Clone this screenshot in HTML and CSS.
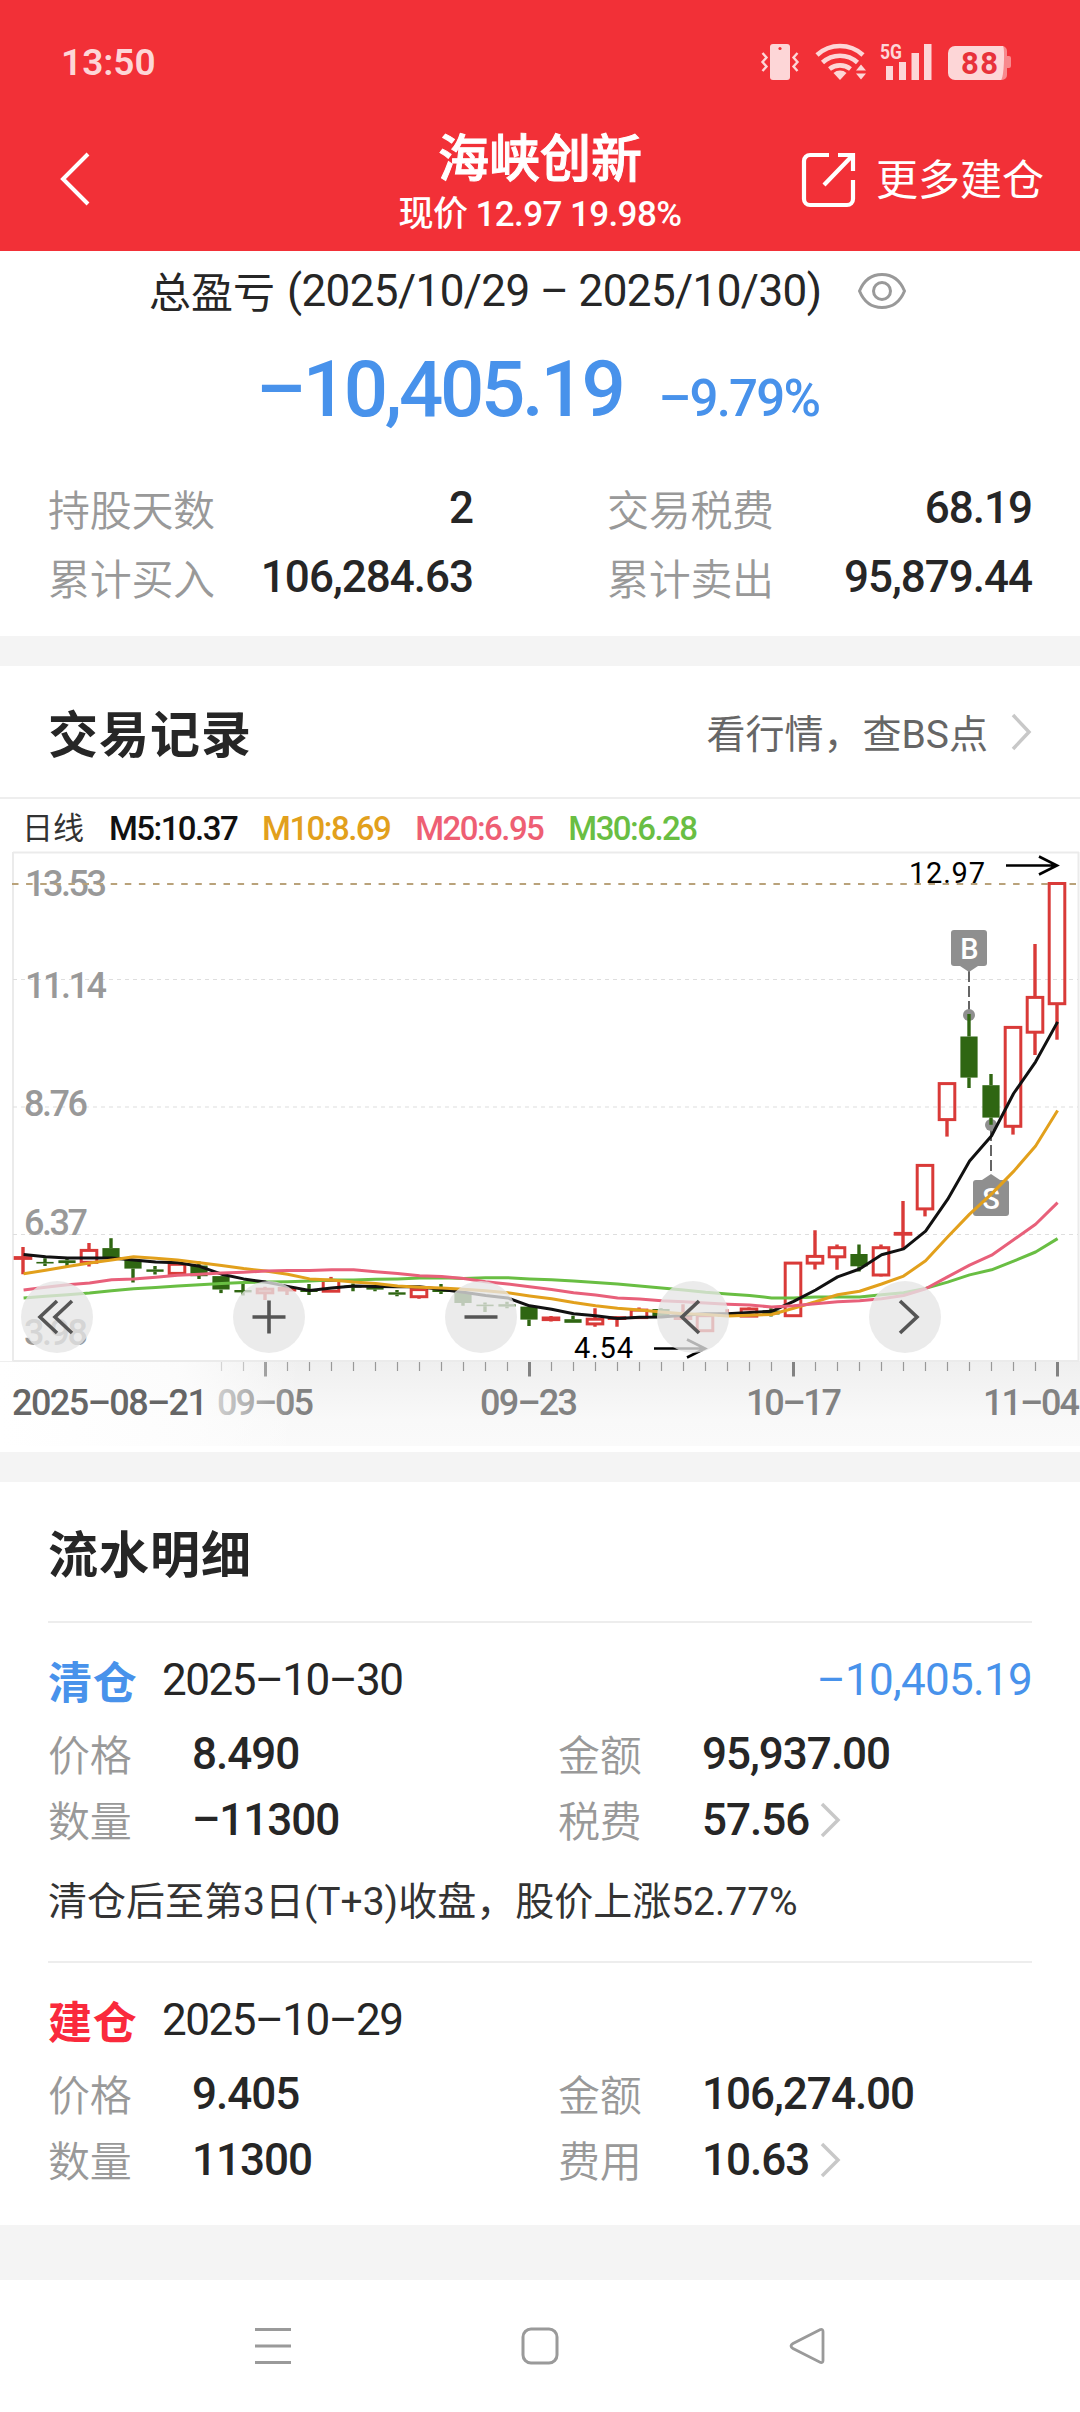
FILE: index.html
```html
<!DOCTYPE html>
<html lang="zh-CN">
<head>
<meta charset="utf-8">
<title>海峡创新</title>
<link rel="stylesheet" href="styles.css">
</head>
<body>
<div class="screen">
  <header class="top">
    <div class="status">
      <span class="clock">13:50</span>
      <svg class="status-icons" width="260" height="44" viewBox="0 0 260 44">
        <g fill="#fdd6d7">
          <path d="M13 4h14a3 3 0 0 1 3 3v30a3 3 0 0 1-3 3H13a3 3 0 0 1-3-3V7a3 3 0 0 1 3-3z"/>
          <circle cx="20" cy="8.500" r="1.600" fill="#f23037"/>
          <path d="M2.500 13l4 4.500-4 4.500 4 4.500-4 4.500M37.500 13l-4 4.500 4 4.500-4 4.500 4 4.500" fill="none" stroke="#fdd6d7" stroke-width="2.400"/>
          <g fill="none" stroke="#fdd6d7" stroke-width="4.600">
            <path d="M57 15a34 34 0 0 1 46 0"/>
            <path d="M62.500 22.500a26 26 0 0 1 35 0"/>
            <path d="M69.500 29a17 17 0 0 1 21 0"/>
          </g>
          <path d="M80 40l-6.500-7a10 10 0 0 1 13 0z"/>
          <path d="M101 24.500l5 6H96zM101 39.500l5-6H96z"/>
          <text class="net" x="120" y="18.500" textLength="22" lengthAdjust="spacingAndGlyphs">5G</text>
          <path d="M126 26h7v14h-7zM139 22h7v18h-7zM151.500 13h7.500v27h-7.500zM164 4h7.500v36H164z"/>
          <path d="M240 6h2a5 5 0 0 1 5 5v5h2a2 2 0 0 1 2 2v8a2 2 0 0 1-2 2h-2v7a5 5 0 0 1-5 5h-2z" fill="#f8898d"/>
          <path d="M195 6h48c2 2 1 32-2 34h-46a7 7 0 0 1-7-7V13a7 7 0 0 1 7-7z"/>
          <text class="battery" x="201" y="34" textLength="37">88</text>
        </g>
      </svg>
    </div>
    <div class="title-bar">
      <svg class="back" width="40" height="60" viewBox="0 0 40 60"><path d="M33 5L8 30l25 25" fill="none" stroke="#fff" stroke-width="4"/></svg>
      <div class="title">
        <h1>海峡创新</h1>
        <p>现价 12.97 19.98%</p>
      </div>
      <div class="more">
        <svg width="56" height="56" viewBox="0 0 56 56"><path d="M28 3H9a6 6 0 0 0-6 6v38a6 6 0 0 0 6 6h37a6 6 0 0 0 6-6V28M37 3h15v16M51 4L23 33" fill="none" stroke="#fff" stroke-width="4.200"/></svg>
        <span>更多建仓</span>
      </div>
    </div>
  </header>

  <section class="summary">
    <div class="period">
      <span class="period-name">总盈亏</span>
      <span class="period-range">(2025/10/29 – 2025/10/30)</span>
      <svg width="50" height="38" viewBox="0 0 50 38"><g fill="none" stroke="#999" stroke-width="3"><path d="M2.500 19C7 8 15 2.500 25 2.500S43 8 47.500 19C43 30 35 35.500 25 35.500S7 30 2.500 19z"/><circle cx="25" cy="19" r="8.500"/></g></svg>
    </div>
    <div class="profit"><strong>–10,405.19</strong><span>–9.79%</span></div>
    <div class="stats">
      <div class="stat"><span class="label">持股天数</span><b>2</b></div>
      <div class="stat"><span class="label">交易税费</span><b>68.19</b></div>
      <div class="stat"><span class="label">累计买入</span><b>106,284.63</b></div>
      <div class="stat"><span class="label">累计卖出</span><b>95,879.44</b></div>
    </div>
  </section>

  <section class="records">
    <div class="section-head">
      <h2>交易记录</h2>
      <div class="quote-link"><span>看行情，查BS点</span><svg width="22" height="38" viewBox="0 0 22 38"><path d="M3 2l16 17L3 36" fill="none" stroke="#c8c8c8" stroke-width="3.500"/></svg></div>
    </div>
    <div class="legend">
      <span class="kind">日线</span>
      <span class="ma5">M5:10.37</span>
      <span class="ma10">M10:8.69</span>
      <span class="ma20">M20:6.95</span>
      <span class="ma30">M30:6.28</span>
    </div>
    <svg class="chart" width="1080" height="602" viewBox="0 850 1080 602">
      <defs>
        <linearGradient id="axisShade" x1="0" y1="0" x2="0" y2="1"><stop offset="0" stop-color="#efefef"/><stop offset=".7" stop-color="#f9f9f9"/><stop offset="1" stop-color="#fafafa"/></linearGradient>
        <linearGradient id="axisFade" x1="0" y1="0" x2="1" y2="0"><stop offset="0" stop-color="#fff"/><stop offset=".6" stop-color="#fdfdfd" stop-opacity=".9"/><stop offset="1" stop-color="#fdfdfd" stop-opacity="0"/></linearGradient>
      </defs>
      <rect x="0" y="1361" width="1080" height="85" fill="url(#axisShade)"/>
      <g class="axis-text">
        <text x="217" y="1415" textLength="97">09–05</text>
        <text x="480" y="1415" textLength="98">09–23</text>
        <text x="746" y="1415" textLength="96">10–17</text>
        <text x="983" y="1415" textLength="97">11–04</text>
      </g>
      <g id="ticks"></g>
      <rect x="0" y="1362" width="300" height="84" fill="url(#axisFade)"/>
      <text class="axis-start" x="12" y="1415" textLength="196">2025–08–21</text>
      <g fill="none" stroke="#ebebeb" stroke-width="2"><path d="M13 852.500H1079M13 1361H1079M13 852V1361M1078.500 852V1361"/></g>
      <g fill="none" stroke="#dedede" stroke-width="1.200" stroke-dasharray="4 4"><path d="M13 979.500H1078M13 1107H1078M13 1234.500H1078"/></g>
      <g class="price-text">
        <text x="25" y="895.500" textLength="82">13.53</text>
        <text x="25" y="997.500" textLength="82">11.14</text>
        <text x="24" y="1115.500" textLength="64">8.76</text>
        <text x="24" y="1234.500" textLength="64">6.37</text>
        <text x="24" y="1344.500" textLength="64">3.98</text>
      </g>
      <path d="M12 884H1078" stroke="#b9a27a" stroke-width="2" stroke-dasharray="6.500 7.600"/>
      <g stroke="#555" stroke-width="1.800" stroke-dasharray="11 4"><path d="M969 971V1012M991 1130V1176"/></g>
      <g fill="#8f8f8f">
        <circle cx="969" cy="1015" r="6"/><circle cx="991" cy="1125" r="6"/>
        <rect x="951" y="930" width="36" height="36" rx="3"/><path d="M960 966h18l-9 6z"/>
        <rect x="973" y="1180" width="36" height="36" rx="3"/><path d="M982 1180h18l-9-6z"/>
      </g>
      <text class="marker" x="969.500" y="958.500">B</text>
      <text class="marker" x="991" y="1208.500">S</text>
      <g id="candles"></g>
      <g id="averages" fill="none" stroke-width="3" stroke-linejoin="round"></g>
      <g class="extreme">
        <text x="909" y="883" textLength="76">12.97</text>
        <text x="574" y="1358" textLength="59">4.54</text>
      </g>
      <path d="M1006 865.500h50M1039 856.500l18 9-18 9M654 1348.500h50M687 1339.500l18 9-18 9" fill="none" stroke="#000" stroke-width="2.600"/>
      <g fill="#e6e6e6" fill-opacity=".78">
        <circle cx="57" cy="1317" r="36"/><circle cx="269" cy="1317" r="36"/><circle cx="481" cy="1317" r="36"/><circle cx="693" cy="1317" r="36"/><circle cx="905" cy="1317" r="36"/>
      </g>
      <path d="M57 1301l-17 16 17 16M72 1301l-17 16 17 16M252.500 1317h33M269 1300.500v33M464.500 1317h33M699 1301l-17 16 17 16M900 1301l17 16-17 16" fill="none" stroke="#555" stroke-width="3.600"/>
    </svg>
  </section>

  <section class="flow">
    <h2>流水明细</h2>
    <article class="trade">
      <div class="trade-head"><strong class="sell">清仓</strong><time>2025–10–30</time><span class="loss">–10,405.19</span></div>
      <div class="trade-row"><span class="label">价格</span><b>8.490</b><span class="label">金额</span><b>95,937.00</b></div>
      <div class="trade-row"><span class="label">数量</span><b>–11300</b><span class="label">税费</span><b>57.56</b><svg width="22" height="38" viewBox="0 0 22 38"><path d="M3 3l16 16L3 35" fill="none" stroke="#c8c8c8" stroke-width="3.500"/></svg></div>
      <p class="note">清仓后至第3日(T+3)收盘，股价上涨52.77%</p>
    </article>
    <article class="trade">
      <div class="trade-head"><strong class="buy">建仓</strong><time>2025–10–29</time></div>
      <div class="trade-row"><span class="label">价格</span><b>9.405</b><span class="label">金额</span><b>106,274.00</b></div>
      <div class="trade-row"><span class="label">数量</span><b>11300</b><span class="label">费用</span><b>10.63</b><svg width="22" height="38" viewBox="0 0 22 38"><path d="M3 3l16 16L3 35" fill="none" stroke="#c8c8c8" stroke-width="3.500"/></svg></div>
    </article>
  </section>

  <nav class="keys">
    <svg width="38" height="38" viewBox="0 0 38 38"><path d="M1 2.500h36M1 19h36M1 35.500h36" stroke="#9a9a9a" stroke-width="3"/></svg>
    <svg width="38" height="38" viewBox="0 0 38 38"><rect x="2" y="2" width="34" height="34" rx="8" fill="none" stroke="#9a9a9a" stroke-width="3"/></svg>
    <svg width="38" height="38" viewBox="0 0 38 38"><path d="M32.500 2.500L5 16.500q-4 2.500 0 5L32.500 35.500q2.500.5 2.500-2V4.500q0-2.500-2.500-2z" fill="none" stroke="#9a9a9a" stroke-width="2.800"/></svg>
  </nav>
</div>
<script src="chart.js"></script>
</body>
</html>
```
FILE: styles.css
```css
* { box-sizing: border-box; }
body { margin: 0; background: #fff; color: #262626; font-family: Roboto, "Noto Sans CJK SC", sans-serif; }
h1, h2, p { margin: 0; }
svg { display: block; flex: none; }
.screen { width: 1080px; height: 2412px; overflow: hidden; display: flex; flex-direction: column; background: #f4f4f4; }

.top { height: 251px; background: #f23037; color: #fff; }
.status { height: 124px; padding: 0 60px 0 61px; display: flex; justify-content: space-between; align-items: center; }
.clock { font-size: 37px; font-weight: 600; color: #fdd6d7; }
.net { font-size: 21px; font-weight: 700; }
.battery { font-size: 31px; font-weight: 700; fill: #e8323a; }
.title-bar { height: 127px; padding: 0 36px; display: grid; grid-template-columns: 1fr 300px 1fr; align-items: start; }
.back { margin: 25px 0 0 19px; }
.title { text-align: center; white-space: nowrap; }
.title h1 { font-size: 51px; line-height: 60px; font-weight: 500; padding-top: 6px; -webkit-text-stroke: 1px #fff; }
.title p { font-size: 35px; line-height: 44px; font-weight: 500; padding-top: 3px; letter-spacing: -.6px; }
.more { display: flex; justify-content: flex-end; align-items: center; gap: 19px; padding-top: 26px; font-size: 42px; line-height: 56px; white-space: nowrap; }
.more span { padding-top: 3px; }

.summary { height: 385px; background: #fff; }
.period { height: 80px; padding: 0 173px 0 149px; display: flex; align-items: center; font-size: 42px; white-space: nowrap; }
.period-name { margin-top: -3px; }
.period-range { margin-left: 12px; font-size: 44px; letter-spacing: -.6px; }
.period svg { margin-left: auto; }
.profit { padding-left: 256px; display: flex; align-items: baseline; gap: 36px; color: #4892eb; line-height: 118px; white-space: nowrap; }
.profit strong { font-size: 78px; font-weight: 500; letter-spacing: -3.3px; }
.profit span { font-size: 51px; font-weight: 500; letter-spacing: -1.8px; }
.stats { padding: 16px 48px 0 48px; display: grid; grid-template-columns: 425px 425px; column-gap: 134px; line-height: 69px; }
.stat { display: flex; justify-content: space-between; }
.label { font-size: 42px; color: #999; font-weight: 350; letter-spacing: -.3px; position: relative; top: 3px; }
b { font-size: 44px; font-weight: 500; letter-spacing: -1px; }

.records { margin-top: 30px; height: 786px; background: #fff; }
.section-head { height: 133px; padding: 0 48px; display: flex; justify-content: space-between; align-items: center; border-bottom: 2px solid #eee; }
h2 { font-size: 50px; font-weight: 700; line-height: 60px; padding-top: 8px; letter-spacing: 1px; }
.quote-link { display: flex; align-items: center; gap: 22px; font-size: 39px; color: #666; }
.quote-link span { margin-top: -2px; }
.legend { height: 51px; padding-left: 22px; display: flex; align-items: center; gap: 25px; font-size: 33px; font-weight: 500; letter-spacing: -1.55px; line-height: 51px; padding-top: 8px; }
.kind { font-size: 31px; font-weight: 400; letter-spacing: 0; color: #333; }
.ma5 { color: #111; }
.ma10 { color: #e2a01c; }
.ma20 { color: #ee5f74; }
.ma30 { color: #69be43; }
.axis-text { font-size: 36px; font-weight: 500; fill: #828282; }
.axis-start { font-size: 36px; font-weight: 500; fill: #666; }
.price-text { font-size: 36px; font-weight: 500; fill: #999; }
.marker { font-size: 29px; font-weight: 500; fill: #fff; text-anchor: middle; }
.extreme { font-size: 29px; fill: #000; }

.flow { margin-top: 30px; height: 743px; padding: 0 48px; background: #fff; }
.flow h2 { height: 139px; line-height: 148px; padding: 0; }
.trade { border-top: 2px solid #ededed; height: 340px; padding-top: 24px; }
.trade-head { display: flex; line-height: 66px; font-size: 44px; white-space: nowrap; }
.trade-head strong { width: 114px; font-weight: 700; font-size: 44px; letter-spacing: .8px; position: relative; top: 4px; }
.trade-head time { letter-spacing: -1.5px; }
.sell, .loss { color: #4892eb; }
.buy { color: #fa2a3c; }
.loss { margin-left: auto; letter-spacing: -.7px; }
.trade-row { height: 66px; line-height: 66px; margin-top: 8px; display: grid; grid-template-columns: 144px 366px 144px auto 1fr; }
.trade-row + .trade-row { margin-top: 0; }
.trade-row svg { margin: 14px 0 0 10px; }
.note { font-size: 39px; line-height: 60px; color: #333; margin-top: 19px; white-space: nowrap; }

.keys { margin-top: 55px; height: 132px; background: #fff; display: flex; padding: 0 254px; justify-content: space-between; align-items: center; }
```
FILE: chart.js
```js
// Vertical positions are in plot units measured from the plot's top.
const TOP = 840, UNIT = 620 / 1568, FIRST = 23, STEP = 22;
const X = i => FIRST + STEP * i;
const Y = u => +(TOP + u * UNIT).toFixed(1);

// [direction, high, body top, body bottom, low]
const candles = [
  ['r',1029,1056,1058,1098],['g',1058,1067,1071,1077],['g',1058,1063,1070,1077],['r',1019,1038,1068,1079],
  ['g',1007,1032,1057,1057],['g',1062,1062,1084,1119],['g',1077,1086,1092,1099],['r',1069,1073,1096,1097],
  ['g',1066,1076,1103,1110],['g',1103,1103,1137,1146],['g',1123,1138,1144,1152],['r',1130,1136,1145,1163],
  ['r',1130,1134,1138,1151],['g',1123,1138,1143,1151],['r',1105,1114,1141,1141],['g',1122,1127,1132,1141],
  ['g',1127,1131,1137,1141],['g',1138,1144,1150,1154],['r',1130,1137,1155,1160],['g',1123,1136,1143,1148],
  ['g',1143,1145,1171,1178],['g',1170,1175,1179,1194],['g',1168,1174,1180,1184],['g',1178,1180,1213,1229],
  ['r',1204,1209,1213,1218],['g',1203,1212,1221,1221],['r',1184,1212,1224,1231],['r',1205,1208,1210,1231],
  ['r',1182,1189,1208,1210],['g',1184,1186,1204,1204],['r',1174,1205,1210,1212],['r',1200,1203,1241,1241],
  ['r',1187,1199,1202,1204],['r',1182,1186,1204,1204],['g',1184,1190,1200,1205],['r',1070,1070,1203,1203],
  ['r',987,1053,1070,1086],['r',1023,1031,1054,1087],['g',1023,1047,1078,1091],['r',1023,1031,1100,1104],
  ['r',913,995,997,1033],['r',823,823,933,952],['r',616,616,707,750],['g',440,497,601,627],
  ['g',592,620,702,720],['r',474,474,724,745],['r',263,398,486,544],['r',110,110,414,505]
];

const averages = {
  '#69be43': [1158,1154,1150,1146,1140,1135,1132,1128,1125,1122,1119,1118,1117,1115,1113,1113,1111,1110,1108,1107,1109,1107,1107,1110,1112,1115,1119,1123,1128,1133,1138,1144,1148,1152,1158,1158,1156,1156,1156,1150,1145,1134,1118,1100,1087,1065,1042,1008],
  '#111': [1048,1054,1057,1057,1057,1062,1067,1069,1078,1098,1110,1118,1129,1139,1133,1128,1129,1130,1130,1137,1144,1152,1158,1178,1187,1198,1203,1210,1207,1206,1202,1198,1198,1195,1192,1167,1138,1105,1085,1049,1034,989,909,812,748,641,561,460],
  '#e2a01c': [1097,1088,1079,1070,1062,1054,1058,1062,1069,1076,1084,1090,1098,1110,1113,1118,1122,1128,1131,1133,1136,1140,1145,1153,1160,1170,1178,1184,1189,1194,1198,1200,1204,1202,1200,1184,1168,1150,1141,1123,1103,1064,1004,946,895,838,774,684],
  '#e8607a': [1138,1131,1125,1120,1112,1110,1106,1101,1098,1095,1093,1090,1089,1089,1087,1087,1092,1096,1102,1104,1109,1117,1123,1130,1137,1145,1151,1158,1161,1165,1168,1171,1174,1176,1181,1178,1173,1168,1165,1160,1152,1135,1105,1075,1050,1011,972,917]
};

document.getElementById('candles').innerHTML = candles.map(([dir, high, top, bottom, low], i) => {
  const x = X(i), color = dir === 'r' ? '#d93a38' : '#2f6612';
  const wicks = `<path d="M${x} ${Y(high)}V${Y(top)}M${x} ${Y(bottom)}V${Y(low)}" stroke="${color}" stroke-width="3.4"/>`;
  const body = dir === 'r'
    ? `<rect x="${x - 7.8}" y="${Y(top)}" width="15.600" height="${((bottom - top) * UNIT).toFixed(1)}" fill="none" stroke="${color}" stroke-width="3"/>`
    : `<rect x="${x - 8.6}" y="${Y(top)}" width="17.200" height="${((bottom - top) * UNIT).toFixed(1)}" fill="${color}"/>`;
  return wicks + body;
}).join('');

document.getElementById('averages').innerHTML = Object.entries(averages).map(([color, values]) =>
  `<polyline stroke="${color}" points="${values.map((v, i) => X(i) + 0.6 + ',' + Y(v)).join(' ')}"/>`).join('');

let ticks = '';
for (let i = 9; i < 48; i++) {
  const major = i % 12 === 11;
  ticks += `<path d="M${X(i) + .5} 1362V${major ? 1376.5 : 1371}" stroke="${major ? '#828282' : '#999'}" stroke-width="${major ? 3 : 1.2}"/>`;
}
document.getElementById('ticks').innerHTML = ticks;
```
